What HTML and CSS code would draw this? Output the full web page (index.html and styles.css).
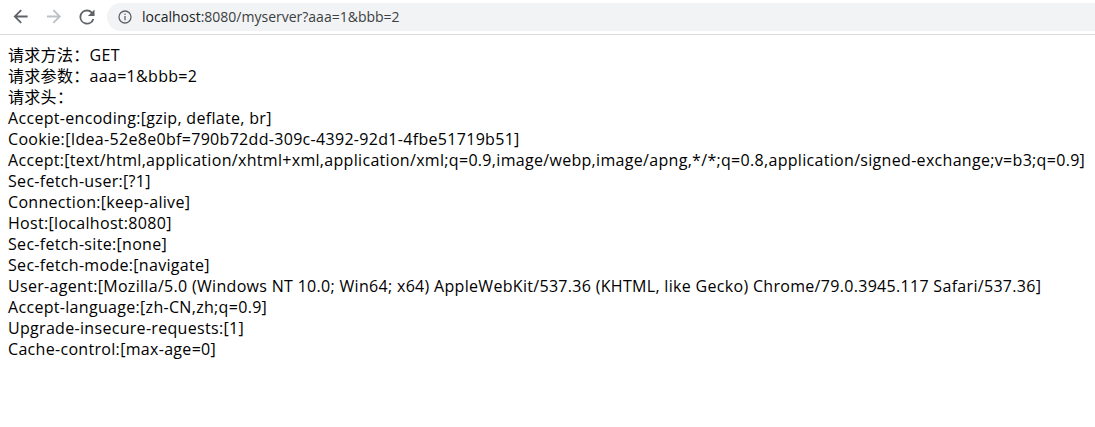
FILE: index.html
```html
<!DOCTYPE html>
<html lang="zh-CN">
<head>
<meta charset="utf-8">
<title>myserver</title>
<link rel="stylesheet" href="styles.css">
</head>
<body>
<header class="toolbar">
  <div class="nav">
    <svg class="nav-icon" width="16" height="16" viewBox="0 0 16 16"><path d="M15 7H3.8l5.1-5.1L7.5.5 0 8l7.5 7.5 1.4-1.4L3.8 9H15z" fill="#5f6368" transform="translate(0.5,0) scale(0.94)"/></svg>
    <svg class="nav-icon" width="16" height="16" viewBox="0 0 16 16"><path d="M1 7h11.2L7.1 1.9 8.5.5 16 8l-7.5 7.5-1.4-1.4L12.2 9H1z" fill="#bdc1c6" transform="scale(0.94)"/></svg>
    <svg class="nav-icon" width="16" height="16" viewBox="0 0 16 16"><path d="M13.6 2.4A7.9 7.9 0 0 0 8 0a8 8 0 1 0 7.7 10h-2.1A6 6 0 1 1 8 2c1.7 0 3.1.7 4.2 1.8L9 7h7V0z" fill="#5f6368" transform="translate(0.5,0.5) scale(0.94)"/></svg>
  </div>
  <div class="omnibox">
    <svg class="info" width="14" height="14" viewBox="0 0 14 14"><circle cx="7" cy="7" r="6" fill="none" stroke="#5f6368" stroke-width="1.3"/><rect x="6.35" y="6" width="1.3" height="4.2" fill="#5f6368"/><rect x="6.35" y="3.6" width="1.3" height="1.3" fill="#5f6368"/></svg>
    <span class="url"><span class="host">localhost</span><span class="rest">:8080/myserver?aaa=1&amp;bbb=2</span></span>
  </div>
</header>
<main class="content">
  <div class="line">请求方法：GET</div>
  <div class="line">请求参数：aaa=1&amp;bbb=2</div>
  <div class="line">请求头：</div>
  <div class="line">Accept-encoding:[gzip, deflate, br]</div>
  <div class="line">Cookie:[Idea-52e8e0bf=790b72dd-309c-4392-92d1-4fbe51719b51]</div>
  <div class="line">Accept:[text/html,application/xhtml+xml,application/xml;q=0.9,image/webp,image/apng,*/*;q=0.8,application/signed-exchange;v=b3;q=0.9]</div>
  <div class="line">Sec-fetch-user:[?1]</div>
  <div class="line">Connection:[keep-alive]</div>
  <div class="line">Host:[localhost:8080]</div>
  <div class="line">Sec-fetch-site:[none]</div>
  <div class="line">Sec-fetch-mode:[navigate]</div>
  <div class="line">User-agent:[Mozilla/5.0 (Windows NT 10.0; Win64; x64) AppleWebKit/537.36 (KHTML, like Gecko) Chrome/79.0.3945.117 Safari/537.36]</div>
  <div class="line">Accept-language:[zh-CN,zh;q=0.9]</div>
  <div class="line">Upgrade-insecure-requests:[1]</div>
  <div class="line">Cache-control:[max-age=0]</div>
</main>
</body>
</html>
```
FILE: styles.css
```css
html, body {
  margin: 0;
  padding: 0;
  background: #ffffff;
}

.toolbar {
  height: 34px;
  border-bottom: 1px solid #dadce0;
  display: flex;
  align-items: center;
  background: #ffffff;
}

.nav {
  display: flex;
  align-items: center;
  gap: 17px;
  padding-left: 13px;
  width: 94px;
  box-sizing: border-box;
}

.nav-icon {
  display: block;
  flex: none;
}

.omnibox {
  flex: 1;
  height: 28px;
  margin-top: -1px;
  margin-left: 13px;
  background: #f1f3f4;
  border-radius: 14px 0 0 14px;
  display: flex;
  align-items: center;
  padding-left: 11px;
}

.info {
  display: block;
  flex: none;
}

.url {
  margin-left: 10px;
  font-family: "Open Sans", "Noto Sans", sans-serif;
  font-size: 14px;
  color: #202124;
  letter-spacing: 0;
}

.url .rest {
  color: #3c4043;
}

.content {
  padding: 10px 8px 8px;
  font-family: "Open Sans", "Noto Sans CJK SC", sans-serif;
  font-size: 16px;
  line-height: 21px;
  letter-spacing: 0.31px;
  color: #000000;
}

.line {
  white-space: nowrap;
}
```
